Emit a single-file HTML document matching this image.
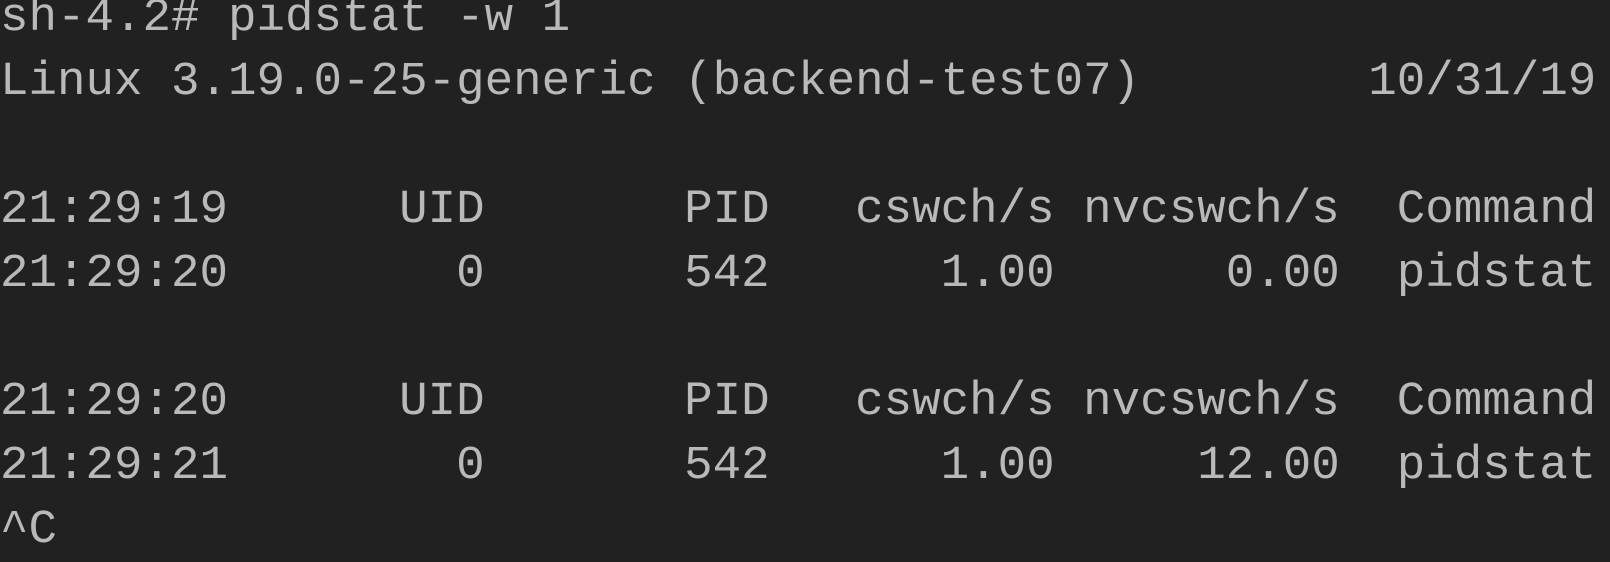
<!DOCTYPE html>
<html><head><meta charset="utf-8"><style>
html,body{margin:0;padding:0;background:#212121;width:1610px;height:518px;overflow:hidden}
pre{margin:0;position:absolute;left:0;top:-14px;font-family:"Liberation Mono","DejaVu Sans Mono",monospace;font-size:47.5px;line-height:64px;color:#b9b9b9;letter-spacing:0}
</style></head><body><pre>sh-4.2# pidstat -w 1
Linux 3.19.0-25-generic (backend-test07)        10/31/19

21:29:19      UID       PID   cswch/s nvcswch/s  Command
21:29:20        0       542      1.00      0.00  pidstat

21:29:20      UID       PID   cswch/s nvcswch/s  Command
21:29:21        0       542      1.00     12.00  pidstat
^C</pre></body></html>
